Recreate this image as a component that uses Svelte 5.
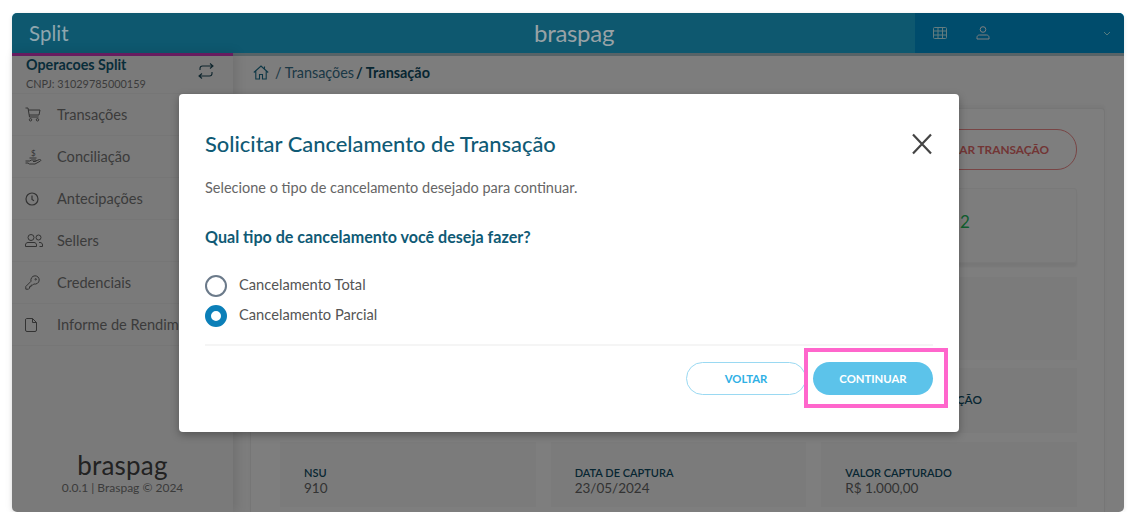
<script>
  const menu = ['Transações','Conciliação','Antecipações','Sellers','Credenciais','Informe de Rendimentos'];
  const fields = [['NSU','910'],['DATA DE CAPTURA','23/05/2024'],['VALOR CAPTURADO','R$ 1.000,00']];
</script>

<div class="frame">
  <header class="top">
    <div class="brand">Split</div>
    <div class="logo-top">braspag</div>
    <div class="user">
      <svg width="14" height="12" viewBox="0 0 14 12" fill="none" stroke="#6f8a96" stroke-width="1"><rect x=".5" y=".5" width="13" height="11" rx="1"/><path d="M.5 4h13M.5 8h13M5 .5v11M9.5 .5v11"/></svg>
      <svg class="person" width="14" height="14" viewBox="0 0 14 14" fill="none" stroke="#8da2ac" stroke-width="1"><circle cx="7" cy="3.5" r="2.8"/><path d="M1 13v-1.5C1 10 2 9 3.5 9h7c1.500 0 2.500 1 2.500 2.500V13z"/></svg>
      <span class="spacer"></span>
      <svg width="8" height="5" viewBox="0 0 8 5" fill="none" stroke="#5f8a9c"><path d="M1 1l3 3 3-3"/></svg>
    </div>
  </header>

  <div class="body">
    <aside class="side">
      <div class="account">
        <div>
          <div class="acc-name">Operacoes Split</div>
          <div class="acc-id">CNPJ: 31029785000159</div>
        </div>
        <svg class="swap" width="18" height="16" viewBox="0 0 18 16" fill="none" stroke="#1d4a5a" stroke-width="1.100"><path d="M3 7V5.500C3 4 4 3 5.500 3H16M13 .5 16 3l-3 2.500M15 9v1.500c0 1.500-1 2.500-2.500 2.500H2M5 10.500 2 13l3 2.500"/></svg>
      </div>
      <nav class="menu">
        {#each menu as m, i}
          <div class="item">
            <span class="ico">
              {#if i === 0}
                <svg width="16" height="15" viewBox="0 0 16 15" fill="none" stroke="#666" stroke-width="1"><path d="M.5 1H3l1.500 9h9M3.300 3H15l-1 5H4.200"/><circle cx="5.500" cy="12.800" r="1.200"/><circle cx="12.500" cy="12.800" r="1.200"/></svg>
              {:else if i === 1}
                <svg width="17" height="16" viewBox="0 0 17 16" fill="none" stroke="#666" stroke-width="1"><path d="M.5 12h4l2-1h4c1 0 1 1.500 0 1.500H8M10.500 12l4-1.500c1.200-.4 1.800 1 .8 1.600L10 15H4.500l-1.500-1H.5"/><text x="6" y="7" font-size="8" fill="#666" stroke="none" font-family="Lato">$</text><path d="M4.500 9h7"/></svg>
              {:else if i === 2}
                <svg width="14" height="14" viewBox="0 0 14 14" fill="none" stroke="#666" stroke-width="1.200"><circle cx="7" cy="7" r="6"/><path d="M7 3.500V7.500l2 1.200"/></svg>
              {:else if i === 3}
                <svg width="18" height="13" viewBox="0 0 18 13" fill="none" stroke="#666" stroke-width="1"><circle cx="6" cy="3.500" r="3"/><circle cx="13.500" cy="3.500" r="2.500"/><path d="M.5 12.500v-1.500c0-1.500 1-2.500 2.500-2.500h6c1.500 0 2.500 1 2.500 2.500v1.500zM14 8.500h1c1.500 0 2.500 1 2.500 2.500v1.500h-3"/></svg>
              {:else if i === 4}
                <svg width="15" height="15" viewBox="0 0 15 15" fill="none" stroke="#666" stroke-width="1"><path d="M.8 14.200V11.500l5.200-5.200C5.400 3.800 7 .8 10 .8c2.400 0 4.200 1.800 4.200 4.200 0 3-3 4.600-5.500 4L7.500 10.200H6v1.500H4.500v1.500L3.500 14.200z"/><circle cx="10.700" cy="4.300" r=".7"/></svg>
              {:else}
                <svg width="12" height="14" viewBox="0 0 12 14" fill="none" stroke="#666" stroke-width="1"><path d="M1.500.5H7.500L11.500 4.500V12a1.500 1.500 0 0 1-1.500 1.500H2A1.500 1.500 0 0 1 .5 12V2A1.500 1.500 0 0 1 1.500.5zM7.500.5v4h4"/></svg>
              {/if}
            </span>
            <span class="label">{m}</span>
          </div>
        {/each}
      </nav>
      <div class="side-foot">
        <div class="logo-foot">braspag</div>
        <div class="ver">0.0.1 | Braspag © 2024</div>
      </div>
    </aside>

    <main class="main">
      <div class="crumb">
        <svg width="16" height="15" viewBox="0 0 16 15" fill="none" stroke="#1d6f8c" stroke-width="1.100"><path d="M.8 7.500 8 1l7.200 6.500M2.800 6v8h3.700V9.500h3V14h3.700V6M11.500 1.500v2"/></svg>
        <span>/ Transações</span><b>/ Transação</b>
      </div>
      <div class="panel">
        <div class="actions"><span class="cancel">CANCELAR TRANSAÇÃO</span></div>
        <div class="status"><span class="num">2</span></div>
        <div class="blank"></div>
        <div class="mid"><span>AUTORIZAÇÃO</span></div>
        <div class="grid">
          {#each fields as f}
            <div class="cell"><div class="k">{f[0]}</div><div class="v">{f[1]}</div></div>
          {/each}
        </div>
      </div>
    </main>
  </div>

  <div class="overlay"></div>
</div>

<section class="modal">
  <div class="m-head">
    <h2>Solicitar Cancelamento de Transação</h2>
    <svg width="22" height="22" viewBox="0 0 22 22" fill="none" stroke="#444" stroke-width="2.200"><path d="M2 1.500l18 19M20 1.500l-18 19"/></svg>
  </div>
  <p class="lead">Selecione o tipo de cancelamento desejado para continuar.</p>
  <h3>Qual tipo de cancelamento você deseja fazer?</h3>
  <div class="opts">
    <div class="opt"><span class="radio"></span>Cancelamento Total</div>
    <div class="opt"><span class="radio on"></span>Cancelamento Parcial</div>
  </div>
  <div class="m-foot">
    <button class="btn ghost">VOLTAR</button>
    <button class="btn solid">CONTINUAR</button>
  </div>
</section>
<div class="mark"></div>

<style>
  :global(body) { margin: 0; background: #fff; font-family: "Lato", "Open Sans", sans-serif; }
  .frame { position: relative; margin: 13px 20px 0 12px; width: 1112px; height: 499px; border-radius: 5px; display: flex; flex-direction: column; background: #fff; box-shadow: 0 1px 4px #e4e4e4; }
  .overlay { position: absolute; inset: 0; z-index: 2; border-radius: 5px; background: rgba(0,0,0,.5); }
  .top { height: 40px; flex: none; background: #1cb0de; border-radius: 5px 5px 0 0; display: flex; align-items: center; position: relative; }
  .brand { width: 221px; box-sizing: border-box; padding-left: 17px; font-size: 20.500px; color: #8fa6ae; position: relative; z-index: 3; }
  .logo-top { position: absolute; z-index: 3; left: 522px; top: 5px; font-size: 24px; color: #98a2a6; letter-spacing: -.3px; line-height: 30px; }
  .user { margin-left: auto; width: 209px; height: 40px; background: #0098d8; border-radius: 0 5px 0 0; display: flex; align-items: center; box-sizing: border-box; padding: 0 13px 0 18px; }
  .user svg { filter: brightness(1.800); }
  .person { margin-left: 29px; }
  .spacer { flex: 1; }
  .body { flex: 1; display: flex; min-height: 0; }
  .side { width: 221px; flex: none; background: #f5f5f5; display: flex; flex-direction: column; border-top: 3px solid #cf39bf; box-sizing: border-box; box-shadow: 3px 0 12px rgba(0,0,0,.12); position: relative; z-index: 1; border-radius: 0 0 0 5px; }
  .account { height: 38px; flex: none; display: flex; justify-content: space-between; align-items: flex-start; box-sizing: border-box; padding: 1px 18px 0 14px; border-bottom: 1px solid #ececec; }
  .swap { margin-top: 6px; }
  .acc-name { font-size: 14.300px; font-weight: 700; color: #115a75; line-height: 15px; }
  .acc-id { font-size: 10.900px; color: #777; line-height: 12px; margin-top: 6px; }
  .menu { display: flex; flex-direction: column; }
  .item { height: 42px; display: flex; align-items: center; box-sizing: border-box; padding-left: 13px; border-bottom: 1px solid #ececec; white-space: nowrap; overflow: hidden; }
  .ico { width: 32px; flex: none; display: flex; align-items: center; }
  .label { font-size: 14.600px; color: #777; }
  .side-foot { margin-top: auto; text-align: center; padding-bottom: 17px; }
  .logo-foot { font-size: 26px; line-height: 30px; color: #444; letter-spacing: .2px; }
  .ver { font-size: 12px; color: #777; }
  .main { flex: 1; min-width: 0; background: #fafafa; display: flex; flex-direction: column; border-top: 3px solid #aec6cf; }
  .crumb { height: 33px; margin-bottom: 19px; flex: none; display: flex; align-items: center; gap: 6px; padding-left: 20px; font-size: 14.400px; color: #37708a; }
  .crumb b { color: #0f4d65; font-weight: 700; margin-left: -4px; }
  .panel { margin: 0 19px 0 17px; padding: 20px 27px 0 29px; flex: 1; background: #fcfcfc; border: solid #ececec; border-width: 1px 1px 0; border-radius: 4px 4px 0 0; box-shadow: 0 -3px 3px rgba(0,0,0,.03); display: flex; flex-direction: column; }
  .actions { display: flex; justify-content: flex-end; }
  .cancel { height: 41px; box-sizing: border-box; padding: 0 27px; border: 1px solid #f08a8a; border-radius: 20px; display: flex; align-items: center; font-size: 11.800px; font-weight: 700; color: #e46a6a; }
  .status { margin-top: 18px; height: 75px; background: #fbfbfb; border: 1px solid #f2f2f2; box-sizing: border-box; border-radius: 3px; box-shadow: 0 4px 2px rgba(0,0,0,.05); position: relative; }
  .num { position: absolute; left: 679px; top: 22px; color: #1fbf5e; font-size: 17px; }
  .blank { height: 83px; margin-top: 14px; background: #f7f7f7; }
  .mid { height: 65px; margin-top: 8px; background: #f7f7f7; position: relative; }
  .mid span { position: absolute; left: 618px; top: 24px; font-size: 11.800px; font-weight: 600; color: #0f4d65; }
  .grid { display: grid; grid-template-columns: repeat(3, 1fr); gap: 15px; margin-top: 9px; }
  .cell { height: 65px; background: #f7f7f7; padding: 24px 0 0 24px; box-sizing: border-box; }
  .k { font-size: 11px; font-weight: 600; color: #0f4d65; line-height: 13px; }
  .v { font-size: 13.500px; color: #666; line-height: 16px; margin-top: 1px; }
  .modal { position: absolute; z-index: 4; left: 179px; top: 94px; width: 780px; height: 338px; box-sizing: border-box; padding: 36px 26px 0; background: #fff; border-radius: 4px; box-shadow: 0 3px 8px rgba(0,0,0,.3); display: flex; flex-direction: column; }
  .m-head { display: flex; justify-content: space-between; align-items: center; height: 27px; }
  h2 { margin: -1px 0 0; font-size: 21.900px; font-weight: 500; color: #0f5a75; line-height: 27px; }
  .lead { margin: 22px 0 0; font-size: 14.500px; line-height: 18px; color: #666; }
  h3 { margin: 30px 0 0; font-size: 16.100px; font-weight: 700; color: #0f5a75; line-height: 20px; }
  .opts { margin-top: 26px; display: flex; flex-direction: column; gap: 8px; }
  .opt { display: flex; align-items: center; gap: 12px; font-size: 14.700px; height: 22px; color: #555; }
  .radio { width: 22px; height: 22px; margin-top: 4px; box-sizing: border-box; border: 2px solid #6b7a8a; border-radius: 50%; background: #fff; }
  .radio.on { border: 6px solid #0b7fb8; }
  .m-foot { margin-top: 19px; border-top: 2px solid #f5f5f5; padding-top: 16px; display: flex; justify-content: flex-end; gap: 7px; }
  .btn { width: 120px; height: 33px; border-radius: 17px; font: 700 11.300px "Lato", sans-serif; padding: 0; }
  .ghost { background: #fff; border: 1px solid #9ad9f2; color: #2fb0e5; }
  .solid { background: #5cc3ea; border: 0; color: #fff; }
  .mark { position: absolute; z-index: 5; left: 804px; top: 348px; width: 144px; height: 60px; box-sizing: border-box; border: 4px solid #ff66cc; }
</style>
